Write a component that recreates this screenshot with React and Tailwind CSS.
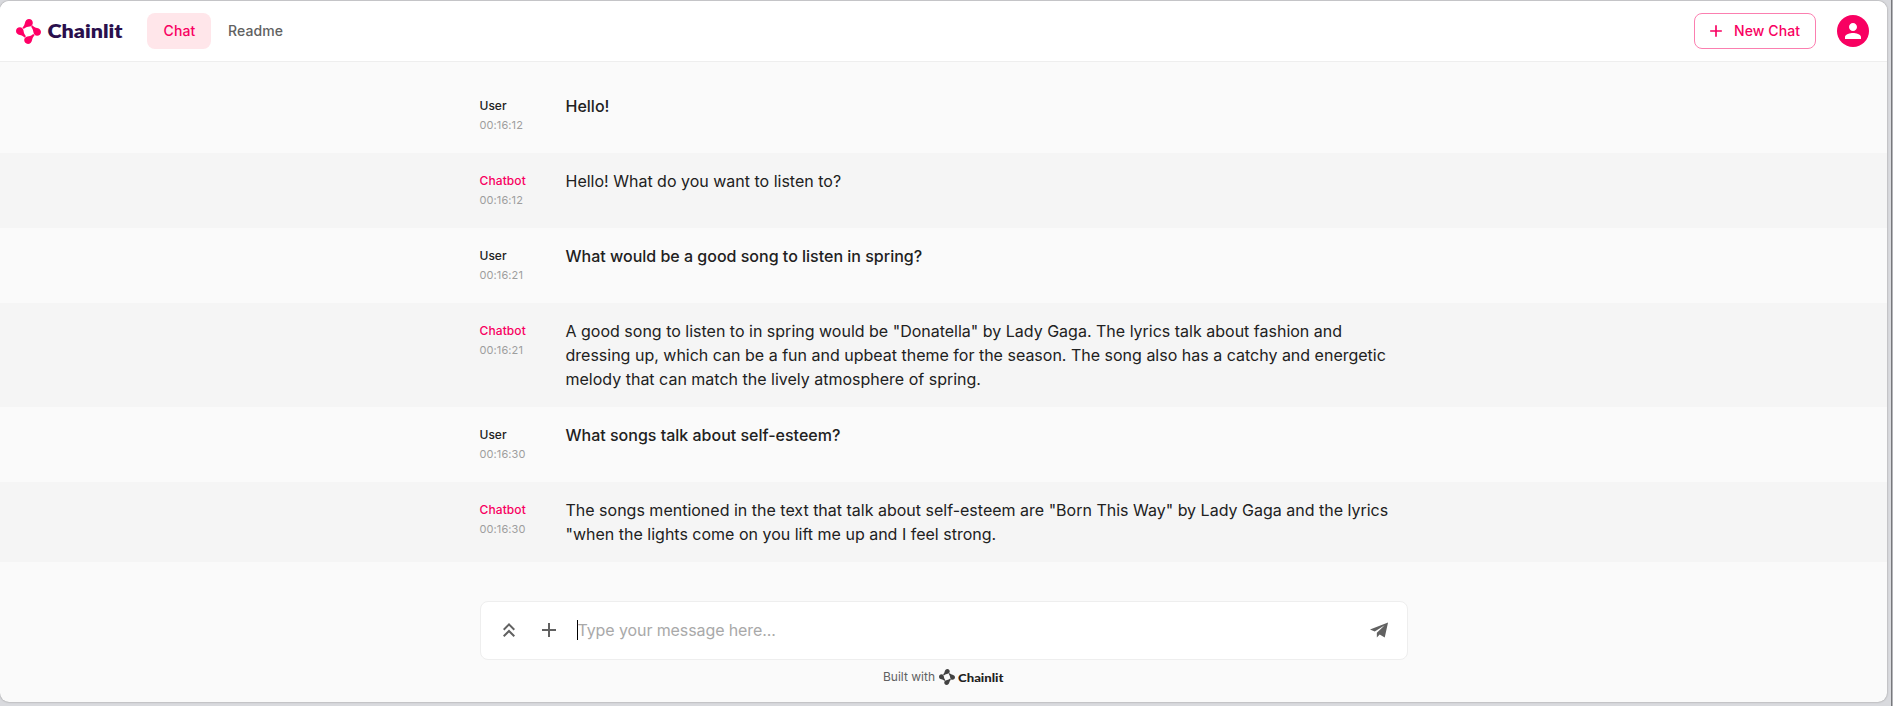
import React from "react";

function Mark({ className }) {
  const drop = "M6.9 7.9 C8 6.8 8.5 5.6 8.9 3.9 C9.5 1.4 11 0 13 0 C15.2 0 16.8 1.7 16.8 3.9 C16.8 5.9 15.4 7.2 13.6 7.5 C11.6 7.8 10.2 8.2 8.7 9.3 C8 9.8 7.2 9.8 6.8 9.3 C6.4 8.8 6.5 8.3 6.9 7.9 Z";
  return (
    <svg viewBox="0 0 25 25" className={className} fill="currentColor">
      <path d={drop} />
      <path d={drop} transform="rotate(90 12.5 12.5)" />
      <path d={drop} transform="rotate(180 12.5 12.5)" />
      <path d={drop} transform="rotate(270 12.5 12.5)" />
    </svg>
  );
}

const messages = [
  { author: "User", time: "00:16:12", text: "Hello!" },
  { author: "Chatbot", time: "00:16:12", text: "Hello! What do you want to listen to?" },
  { author: "User", time: "00:16:21", text: "What would be a good song to listen in spring?" },
  {
    author: "Chatbot",
    time: "00:16:21",
    text: 'A good song to listen to in spring would be "Donatella" by Lady Gaga. The lyrics talk about fashion and dressing up, which can be a fun and upbeat theme for the season. The song also has a catchy and energetic melody that can match the lively atmosphere of spring.',
  },
  { author: "User", time: "00:16:30", text: "What songs talk about self-esteem?" },
  {
    author: "Chatbot",
    time: "00:16:30",
    text: 'The songs mentioned in the text that talk about self-esteem are "Born This Way" by Lady Gaga and the lyrics "when the lights come on you lift me up and I feel strong.',
  },
];

function Message({ author, time, text }) {
  const bot = author === "Chatbot";
  return (
    <div className={bot ? "bg-[#f5f5f5] py-4" : "py-4"}>
      <div className="mx-auto flex w-[928px]">
        <div className="flex w-[86px] shrink-0 flex-col">
          <span className={bot ? "h-[23px] text-xs leading-[23px] font-medium tracking-[0.1px] text-[#f80061]" : "h-[23px] text-xs leading-[23px] font-medium text-[#212121]"}>{author}</span>
          <span className="h-5 text-[11px] leading-4 tracking-[0.1px] text-[#9e9e9e]">{time}</span>
        </div>
        <p className={bot ? "w-[828px] text-base leading-6 text-[#212121]" : "w-[828px] text-base leading-6 font-medium text-[#212121]"}>{text}</p>
      </div>
    </div>
  );
}

export default function App() {
  return (
    <div className="flex h-[706px] w-[1893px] bg-[#d9dade] pt-px font-['Inter',sans-serif]">
      <div className="flex h-[701px] w-[1887px] flex-col overflow-hidden rounded-[9px] bg-[#fafafa] shadow-[0_0_2px_#888]">
        <header className="flex h-[61px] shrink-0 items-center border-b border-[#eeeeee] bg-white pr-[18px] pl-4">
          <Mark className="size-[25px] text-[#ff0066]" />
          <svg className="ml-[6px] h-6 w-[78px] overflow-visible text-[#2a0f4d]">
            <text x="0.5" y="18.5" textLength="75" lengthAdjust="spacingAndGlyphs" fill="currentColor" className="font-['Lato',sans-serif] text-[19px] font-extrabold">Chainlit</text>
          </svg>
          <nav className="ml-[22px] flex items-center text-sm font-medium tracking-[0.1px]">
            <span className="flex h-9 w-16 items-center justify-center rounded-lg bg-[#ffe6ea] pl-px text-[#f80061]">Chat</span>
            <span className="ml-[17px] text-[#616161]">Readme</span>
          </nav>
          <button className="ml-auto flex h-9 w-[122px] items-center rounded-lg border border-[#fb7fb0] pl-[11px] text-sm font-medium tracking-[0.1px] text-[#f80061]">
            <svg viewBox="0 0 24 24" className="mr-[8px] size-5" fill="currentColor"><path d="M19 13h-6v6h-2v-6H5v-2h6V5h2v6h6z" /></svg>
            New Chat
          </button>
          <span className="ml-[21px] flex size-8 items-center justify-center rounded-full bg-[#f80061] text-white">
            <svg viewBox="0 0 24 24" className="size-6" fill="currentColor"><path d="M12 12c2.21 0 4-1.79 4-4s-1.79-4-4-4-4 1.79-4 4 1.79 4 4 4m0 2c-2.67 0-8 1.34-8 4v2h16v-2c0-2.66-5.33-4-8-4" /></svg>
          </span>
        </header>
        <main className="flex flex-col pt-4">
          {messages.map((m, i) => <Message key={i} {...m} />)}
        </main>
        <div className="mx-auto mt-[39px] flex h-[59px] w-[928px] shrink-0 items-center rounded-lg border border-[#eeeeee] bg-white px-4 pb-px text-[#616161]">
          <svg viewBox="0 0 24 24" className="size-6" fill="currentColor"><path d="M6 17.59 7.41 19 12 14.42 16.59 19 18 17.59l-6-6z" /><path d="m6 11 1.41 1.41L12 7.83l4.59 4.58L18 11l-6-6z" /></svg>
          <svg viewBox="0 0 24 24" className="ml-4 size-6" fill="currentColor"><path d="M19 13h-6v6h-2v-6H5v-2h6V5h2v6h6z" /></svg>
          <span className="ml-4 h-5 w-px bg-black" />
          <span className="text-base tracking-[-0.1px] text-[#a9a9a9]">Type your message here...</span>
          <svg viewBox="0 0 20 16" className="mr-[2px] ml-auto h-4 w-[19px]" fill="currentColor"><path d="M19 0 0 7.5l5 2L15.5 3 7.2 11v5l3-3.2L15.5 16z" /></svg>
        </div>
        <div className="mx-auto mt-[9px] flex h-4 items-center text-xs text-[#616161]">
          <span>Built with</span>
          <Mark className="ml-1 size-4 text-[#424242]" />
          <svg className="ml-[3px] h-4 w-[46px] overflow-visible text-[#212121]">
            <text x="0" y="12.5" textLength="45.5" lengthAdjust="spacingAndGlyphs" fill="currentColor" className="font-['Lato',sans-serif] text-xs font-black">Chainlit</text>
          </svg>
        </div>
      </div>
      <div className="-mt-px ml-auto h-[706px] w-[2px] border-l border-[#77787c] bg-[#b4b5b9]" />
    </div>
  );
}
